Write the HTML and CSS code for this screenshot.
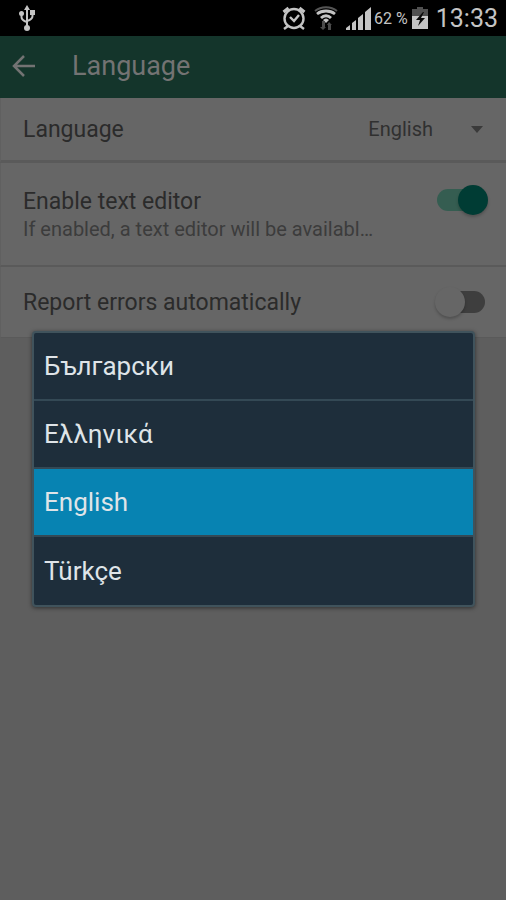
FILE: index.html
```html
<!DOCTYPE html>
<html lang="en">
<head>
<meta charset="utf-8">
<meta name="viewport" content="width=device-width, initial-scale=1">
<title>Language</title>
<link rel="stylesheet" href="styles.css">
</head>
<body>
<div class="status">
  <svg class="usb" width="18" height="28" viewBox="0 0 18 28" fill="none" stroke="#c4c4c4" stroke-width="2">
    <path d="M9 5v19M3.500 9v4c0 3 2 4 5.500 5M14.500 8v4c0 3-2 4-5.500 5"/>
    <g fill="#c4c4c4" stroke="none"><path d="M9 1l3 5H6z"/><circle cx="3.500" cy="9.500" r="2.500"/><path d="M12 6h5v5h-5z"/><circle cx="9" cy="24" r="3"/></g>
  </svg>
  <div class="indicators">
    <svg width="24" height="24" viewBox="0 0 24 24" fill="none" stroke="#c4c4c4" stroke-width="2.400">
      <circle cx="12" cy="12.500" r="9.500"/><path d="M8 11l4 4 5-6M6 20l-4 3M18 20l4 3" /><path stroke-width="3" d="M1.500 6l5-4M22.500 6l-5-4"/>
    </svg>
    <svg class="wifi" width="24" height="24" viewBox="0 0 24 24" fill="none">
      <path stroke="#555" stroke-width="2" d="M1 5c6-5 16-5 22 0"/>
      <path stroke="#c4c4c4" stroke-width="2.800" d="M3 8c5-4 13-4 18 0M7 12c3-3 7-3 10 0"/>
      <path fill="#c4c4c4" d="M9 14c2-2 4-2 6 0l-3 3z"/>
      <path fill="#4a4a4a" d="M8 15h3v6h1l-3 3-3-3h2zM14 24h3v-5h1l-3-3-2 3h1z"/>
    </svg>
    <svg width="25" height="24" viewBox="0 0 25 24" fill="#c4c4c4">
      <path d="M0 24v-2l4-3v5zM6 24v-7l4-3v10zM12 24V12l5-4v16zM19 24V6l6-5v23z"/>
    </svg>
    <span class="percent">62 %</span>
    <svg class="battery" width="16" height="22" viewBox="0 0 16 22">
      <path fill="#505050" d="M0 2h5V0h6v2h5v8H0z"/><path fill="#c4c4c4" d="M0 9h16v13H0z"/><path fill="#080808" d="M11 5l-7 8h4l-2 6 7-8H9l3-6z"/>
    </svg>
    <span class="clock">13:33</span>
  </div>
</div>
<header class="toolbar">
  <button class="back" aria-label="Back">
    <svg width="24" height="24" viewBox="0 0 24 24" fill="none" stroke="currentColor" stroke-width="2.500"><path d="M12 2L2 12l10 10M2 12h21"/></svg>
  </button>
  <h1>Language</h1>
</header>
<main class="settings">
  <div class="row language">
    <label for="language">Language</label>
    <div class="picker">
      <select id="language"><option>Български</option><option>Ελληνικά</option><option selected>English</option><option>Türkçe</option></select>
      <svg width="12" height="7" viewBox="0 0 12 7"><path fill="#3a3a3a" d="M0 0h12L6 7z"/></svg>
    </div>
  </div>
  <div class="row editor">
    <div class="copy">
      <label for="editor">Enable text editor</label>
      <p id="hint">If enabled, a text editor will be availabl…</p>
    </div>
    <input class="switch" type="checkbox" id="editor" aria-describedby="hint" checked>
  </div>
  <div class="row errors">
    <label for="errors">Report errors automatically</label>
    <input class="switch" type="checkbox" id="errors">
  </div>
  <div class="menu">
    <button lang="bg">Български</button>
    <button lang="el">Ελληνικά</button>
    <button class="current">English</button>
    <button lang="tr">Türkçe</button>
  </div>
</main>
</body>
</html>
```
FILE: styles.css
```css
* { box-sizing: border-box; }

body {
  margin: 0;
  min-height: 100vh;
  background: #5e5e5e;
  color: #2b2b2b;
  font-family: Roboto, "Noto Sans", sans-serif;
}

button { padding: 0; border: 0; background: none; font: inherit; text-align: left; }

.status {
  display: flex;
  align-items: center;
  justify-content: space-between;
  height: 36px;
  padding: 0 8px 0 18px;
  background: #000;
  color: #c4c4c4;
}

.indicators { display: flex; align-items: center; }
.wifi { margin: 0 8px; }
.percent { margin: 0 4px 0 3px; font-size: 16px; }
.clock { margin-left: 8px; font-size: 25px; }

.toolbar {
  display: flex;
  align-items: center;
  gap: 36px;
  height: 62px;
  padding: 0 12px 2px;
  background: #14352b;
  color: #737373;
}

.back { display: flex; color: inherit; }
h1 { margin: 0; font-size: 27px; font-weight: 400; }

.settings { position: relative; }

.row {
  display: flex;
  align-items: center;
  justify-content: space-between;
  padding: 0 21px 0 22px;
  border-left: 1px solid #606060;
  border-bottom: 2px solid #5a5a5a;
  background: #666;
  font-size: 23px;
}

.language { height: 65px; border-bottom-width: 3px; }
.editor { height: 104px; }
.errors { height: 71px; border-bottom-width: 1px; }

.picker { display: flex; align-items: center; gap: 38px; padding-right: 2px; }

select {
  padding: 0;
  border: 0;
  appearance: none;
  background: none;
  color: #303030;
  font: inherit;
  font-size: 20px;
  field-sizing: content;
}

.copy { min-width: 0; }
.copy p { margin: 2px 0 0; color: #3c3c3c; font-size: 20px; line-height: 24px; }

.switch {
  position: relative;
  flex: none;
  appearance: none;
  width: 48px;
  height: 22px;
  margin: 0;
  border-radius: 11px;
  background: #3e3e3e;
}

.editor .switch { align-self: flex-start; margin-top: 26px; }

.switch::before {
  content: "";
  position: absolute;
  top: -4px;
  left: -2px;
  width: 30px;
  height: 30px;
  border-radius: 50%;
  background: #666;
  box-shadow: 0 2px 3px #00000038;
}

.switch:checked { background: #355d51; }
.switch:checked::before { left: 21px; background: #003c34; }

.menu {
  position: absolute;
  top: 233px;
  left: 32px;
  right: 31px;
  border: 2px solid #40535c;
  border-radius: 4px;
  background: #1e2e3b;
  box-shadow: 0 1px 4px #00000080;
}

.menu button {
  display: block;
  width: 100%;
  height: 68px;
  padding: 0 10px;
  border-bottom: 2px solid #344955;
  color: #dfe4e8;
  font-size: 26px;
}

.menu button:last-child { border-bottom: 0; }
.menu .current { background: #0783b2; }
```
